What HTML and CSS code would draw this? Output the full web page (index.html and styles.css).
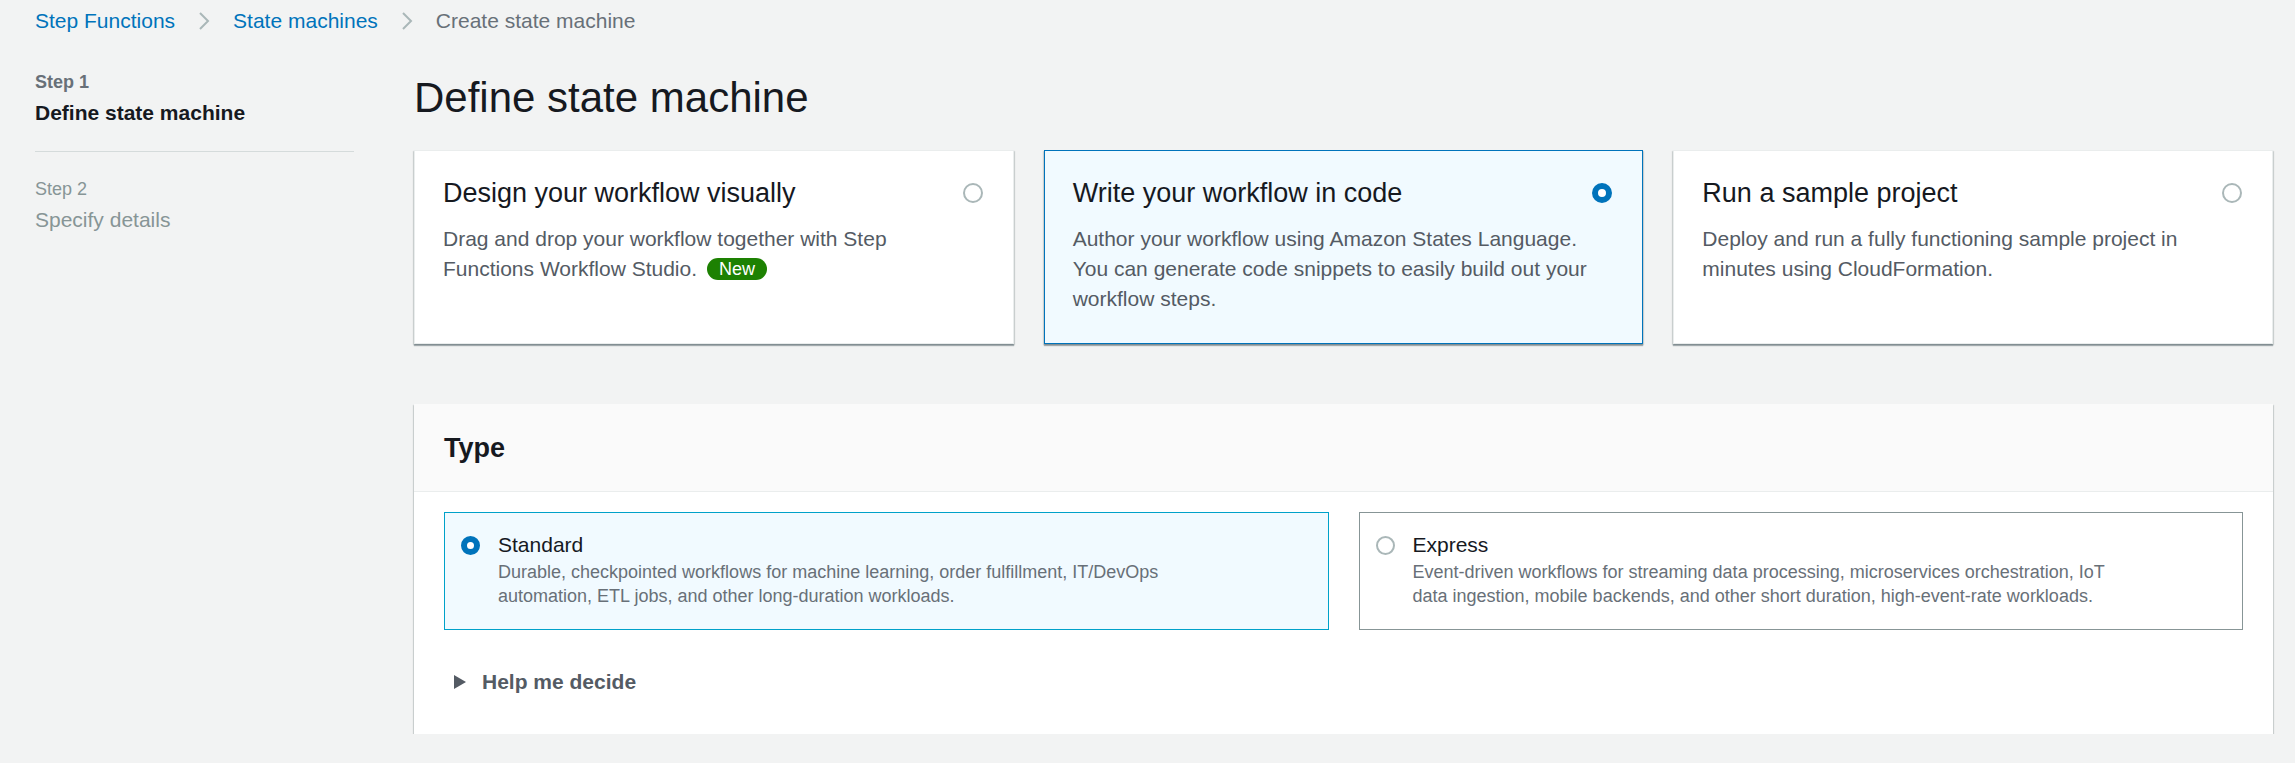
FILE: index.html
```html
<!DOCTYPE html>
<html lang="en">
<head>
<meta charset="utf-8">
<title>Create state machine</title>
<link rel="stylesheet" href="styles.css">
</head>
<body>
<nav class="breadcrumbs">
  <a class="crumb-link" href="#">Step Functions</a>
  <svg class="chev" viewBox="0 0 14 20" width="14" height="20"><polyline points="3,2 11,10 3,18" fill="none" stroke="#aab7b8" stroke-width="2"/></svg>
  <a class="crumb-link" href="#">State machines</a>
  <svg class="chev" viewBox="0 0 14 20" width="14" height="20"><polyline points="3,2 11,10 3,18" fill="none" stroke="#aab7b8" stroke-width="2"/></svg>
  <span class="crumb-current">Create state machine</span>
</nav>

<div class="layout">
  <aside class="steps">
    <div class="step step-active">
      <div class="step-num">Step 1</div>
      <div class="step-name">Define state machine</div>
    </div>
    <div class="step step-inactive">
      <div class="step-num">Step 2</div>
      <div class="step-name">Specify details</div>
    </div>
  </aside>

  <main class="main">
    <h1 class="page-title">Define state machine</h1>

    <div class="cards">
      <div class="card">
        <div class="card-head">
          <h3 class="card-title">Design your workflow visually</h3>
          <span class="radio"></span>
        </div>
        <p class="card-desc"><span>Drag and drop your workflow together with Step Functions Workflow Studio.</span> <span class="badge">New</span></p>
      </div>
      <div class="card card-selected">
        <div class="card-head">
          <h3 class="card-title">Write your workflow in code</h3>
          <span class="radio radio-on"></span>
        </div>
        <p class="card-desc">Author your workflow using Amazon States Language. You can generate code snippets to easily build out your workflow steps.</p>
      </div>
      <div class="card">
        <div class="card-head">
          <h3 class="card-title">Run a sample project</h3>
          <span class="radio"></span>
        </div>
        <p class="card-desc">Deploy and run a fully functioning sample project in minutes using CloudFormation.</p>
      </div>
    </div>

    <section class="container">
      <div class="container-header">
        <h2 class="container-title">Type</h2>
      </div>
      <div class="container-body">
        <div class="tiles">
          <div class="tile tile-selected">
            <span class="radio radio-sm radio-on"></span>
            <div class="tile-text">
              <div class="tile-label">Standard</div>
              <div class="tile-desc">Durable, checkpointed workflows for machine learning, order fulfillment, IT/DevOps automation, ETL jobs, and other long-duration workloads.</div>
            </div>
          </div>
          <div class="tile">
            <span class="radio radio-sm"></span>
            <div class="tile-text">
              <div class="tile-label">Express</div>
              <div class="tile-desc">Event-driven workflows for streaming data processing, microservices orchestration, IoT data ingestion, mobile backends, and other short duration, high-event-rate workloads.</div>
            </div>
          </div>
        </div>
        <div class="expander">
          <svg class="caret" viewBox="0 0 12 14" width="12" height="14"><polygon points="0,0 12,7 0,14" fill="#545b64"/></svg>
          <span class="expander-label">Help me decide</span>
        </div>
      </div>
    </section>
  </main>
</div>
</body>
</html>
```

FILE: styles.css
```css
* { box-sizing: border-box; }

body {
  margin: 0;
  background: #f2f3f3;
  font-family: "Liberation Sans", Arial, sans-serif;
  color: #16191f;
}

.breadcrumbs {
  display: flex;
  align-items: center;
  height: 41px;
  padding-left: 35px;
  font-size: 21px;
}

.crumb-link {
  color: #0073bb;
  text-decoration: none;
}

.chev {
  margin: 0 22px 0 22px;
}

.crumb-current {
  color: #687078;
}

.layout {
  display: flex;
  align-items: flex-start;
  padding: 0 22px 0 35px;
}

.steps {
  width: 319px;
  flex: none;
  padding-top: 28px;
  margin-right: 60px;
}

.step-num {
  font-size: 18px;
  line-height: 27px;
}

.step-name {
  font-size: 21px;
  line-height: 33px;
}

.step-active {
  padding-bottom: 22px;
  border-bottom: 1px solid #d5dbdb;
}

.step-active .step-num {
  font-weight: bold;
  color: #687078;
}

.step-active .step-name {
  font-weight: bold;
  color: #16191f;
}

.step-inactive {
  padding-top: 24px;
}

.step-inactive .step-num,
.step-inactive .step-name {
  color: #879596;
}

.main {
  flex: 1;
  min-width: 0;
}

.page-title {
  margin: 0;
  padding-top: 27px;
  font-size: 42px;
  line-height: 60px;
  font-weight: normal;
  color: #16191f;
}

.cards {
  display: flex;
  gap: 30px;
  margin-top: 22px;
}

.card {
  flex: 1;
  background: #fff;
  border: 1px solid #eaeded;
  padding: 24px 30px 29px 28px;
  box-shadow: 0 2px 1px 0 rgba(0, 28, 36, 0.3), 1px 1px 1px 0 rgba(0, 28, 36, 0.12), -1px 1px 1px 0 rgba(0, 28, 36, 0.12);
}

.card-selected {
  background: #f1faff;
  border-color: #0073bb;
}

.card-head {
  display: flex;
  align-items: center;
  justify-content: space-between;
}

.card-title {
  margin: 0;
  font-size: 27px;
  line-height: 36px;
  font-weight: normal;
  color: #16191f;
}

.card-desc {
  margin: 13px 0 0;
  font-size: 21px;
  line-height: 30px;
  color: #545b64;
}

.badge {
  display: inline-block;
  margin-left: 4px;
  background: #1d8102;
  color: #fff;
  font-size: 18px;
  line-height: 22px;
  padding: 0 12px;
  border-radius: 11px;
  vertical-align: 1px;
}

.radio {
  flex: none;
  width: 20px;
  height: 20px;
  border-radius: 50%;
  border: 2px solid #aab7b8;
  background: #fff;
}

.radio-on {
  border: 6.5px solid #0073bb;
  background: #fff;
}

.radio-sm {
  width: 19px;
  height: 19px;
}

.radio-sm.radio-on {
  border-width: 6px;
}

.container {
  margin-top: 60px;
  background: #fff;
  box-shadow: 0 2px 1px 0 rgba(0, 28, 36, 0.3), 1px 1px 1px 0 rgba(0, 28, 36, 0.12), -1px 1px 1px 0 rgba(0, 28, 36, 0.12);
}

.container-header {
  background: #fafafa;
  border-bottom: 1px solid #eaeded;
  padding: 26px 30px 25px;
}

.container-title {
  margin: 0;
  font-size: 27px;
  line-height: 36px;
  font-weight: bold;
  color: #16191f;
}

.container-body {
  padding: 20px 30px 37px;
}

.tiles {
  display: flex;
  gap: 30px;
}

.tile {
  flex: 1;
  display: flex;
  align-items: flex-start;
  gap: 18px;
  border: 1px solid #879596;
  padding: 17px 16px 21px;
  background: #fff;
}

.tile .radio {
  margin-top: 6px;
}

.tile-selected {
  border-color: #00a1c9;
  background: #f1faff;
}

.tile-label {
  font-size: 21px;
  line-height: 30px;
  color: #16191f;
}

.tile-desc {
  max-width: 710px;
  font-size: 18px;
  line-height: 24px;
  color: #687078;
}

.expander {
  display: flex;
  align-items: center;
  margin-top: 37px;
  padding-left: 10px;
  height: 30px;
}

.caret {
  margin-right: 16px;
}

.expander-label {
  font-size: 21px;
  font-weight: bold;
  color: #545b64;
}
```
